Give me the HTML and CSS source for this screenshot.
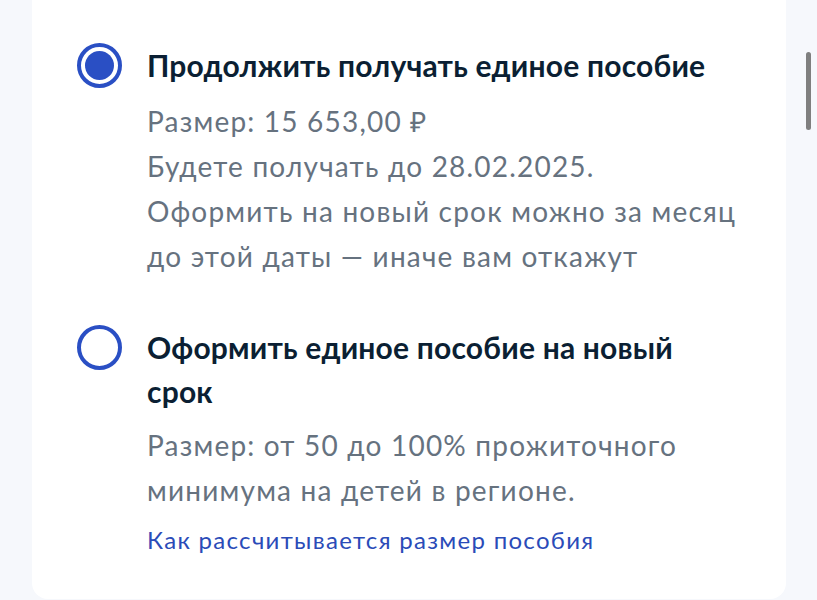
FILE: index.html
```
<!DOCTYPE html>
<html lang="ru">
<head>
<meta charset="utf-8">
<link rel="stylesheet" href="styles.css">
</head>
<body>
<div class="page">
  <div class="card">
    <div class="option">
      <span class="radio radio-checked"><span class="dot"></span></span>
      <div class="body">
        <div class="title">Продолжить получать единое пособие</div>
        <div class="desc">Размер: 15&nbsp;653,00 ₽<br>Будете получать до 28.02.2025.<br>Оформить на новый срок можно за месяц<br>до этой даты — иначе вам откажут</div>
      </div>
    </div>
    <div class="option">
      <span class="radio"></span>
      <div class="body">
        <div class="title">Оформить единое пособие на новый<br>срок</div>
        <div class="desc desc-second">Размер: от 50 до 100% прожиточного<br>минимума на детей в регионе.</div>
        <a class="link" href="#">Как рассчитывается размер пособия</a>
      </div>
    </div>
  </div>
  <div class="scrollbar"></div>
</div>
</body>
</html>
```
FILE: styles.css
```
html, body {
  margin: 0;
  padding: 0;
}
body {
  background: #f6f8fc;
  font-family: Lato, "Open Sans", sans-serif;
  width: 817px;
  height: 600px;
  overflow: hidden;
}
.page {
  position: relative;
  height: 600px;
  padding-left: 32px;
}
.card {
  width: 754px;
  box-sizing: border-box;
  background: #ffffff;
  border-radius: 0 0 16px 16px;
  padding: 43px 0 44px 45px;
  display: flex;
  flex-direction: column;
  gap: 46px;
}
.option {
  display: flex;
  gap: 25px;
  align-items: flex-start;
}
.radio {
  flex: none;
  width: 45px;
  height: 45px;
  box-sizing: border-box;
  border: 4px solid #2a4fc4;
  border-radius: 50%;
  display: flex;
  align-items: center;
  justify-content: center;
}
.dot {
  width: 29px;
  height: 29px;
  border-radius: 50%;
  background: #2a4fc4;
}
.body {
  display: flex;
  flex-direction: column;
}
.title {
  font-size: 30px;
  line-height: 44px;
  font-weight: 700;
  letter-spacing: 0.2px;
  color: #0b1f33;
}
.desc {
  font-size: 28px;
  line-height: 45px;
  letter-spacing: 1.2px;
  color: #66727f;
  margin-top: 12px;
}
.desc-second {
  margin-top: 10px;
}
.link {
  margin-top: 12px;
  font-size: 24px;
  line-height: 30px;
  letter-spacing: 1.3px;
  color: #2a4bb8;
  text-decoration: none;
}
.scrollbar {
  position: absolute;
  left: 806px;
  top: 52px;
  width: 5px;
  height: 78px;
  border-radius: 3px;
  background: #7f7f7f;
}
```
